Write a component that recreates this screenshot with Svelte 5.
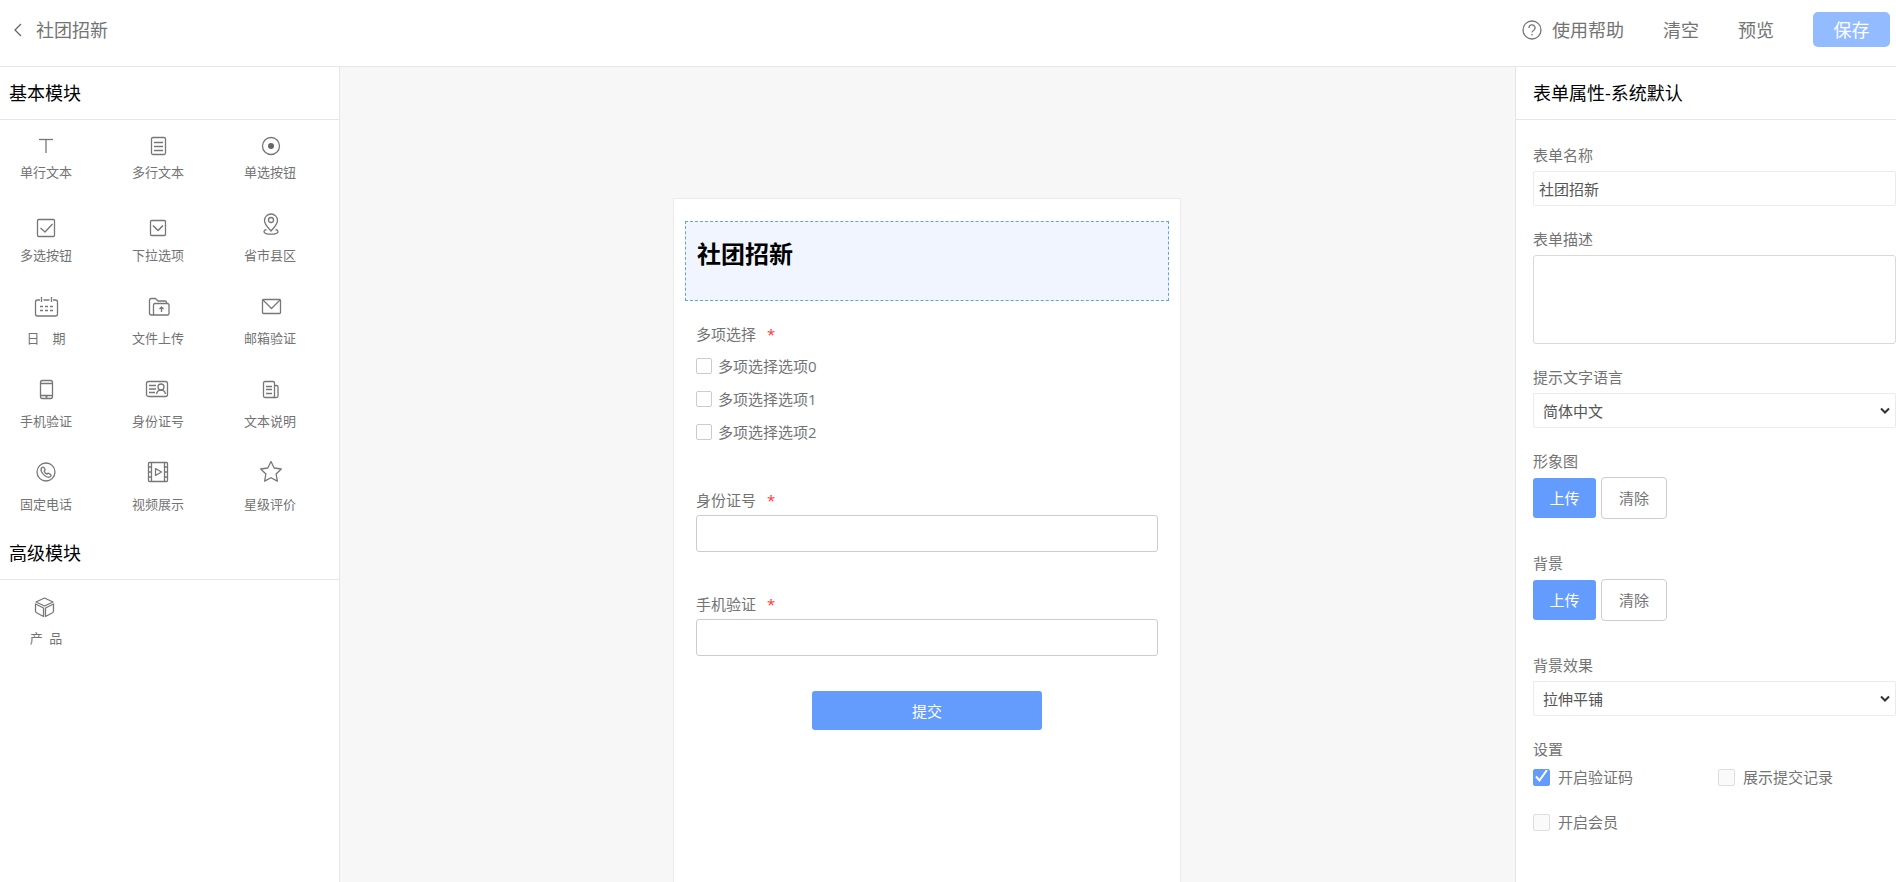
<script>
    const basicModules = [
        {name: "单行文本", icon: `<line x1="7" y1="11.5" x2="21" y2="11.5"/><line x1="14" y1="11.5" x2="14" y2="25"/>`},
        {name: "多行文本", icon: `<rect x="7.5" y="9.5" width="14" height="17" rx="1.5"/><path d="M10 14.5h9M10 18.5h9M10 22.5h9"/>`},
        {name: "单选按钮", icon: `<circle cx="15" cy="18" r="8.5"/><circle cx="15" cy="18" r="3" fill="#666" stroke="none"/>`},
        {name: "多选按钮", icon: `<rect x="5.5" y="8.5" width="17" height="17" rx="1"/><path d="M8.5 17l4.5 4 7.5-8"/>`},
        {name: "下拉选项", icon: `<rect x="6.5" y="9.5" width="15" height="15" rx="1"/><path d="M9 14.5l5 5 5-5" stroke-width="1.6"/>`},
        {name: "省市县区", icon: `<path d="M15 20c-2.5-3-6.5-6.5-6.5-10.5a6.5 6.5 0 0 1 13 0c0 4-4 7.5-6.5 10.5z"/><circle cx="15" cy="9" r="2.5"/><path d="M10.5 18.5c-2 .5-2.5 1.3-2.5 2 0 1.5 3 2.7 7 2.7s7-1.2 7-2.7c0-.7-.5-1.5-2.5-2"/>`},
        {name: "日　期", icon: `<path d="M8 6H5.5a2 2 0 0 0-2 2v12a2 2 0 0 0 2 2h18a2 2 0 0 0 2-2V8a2 2 0 0 0-2-2H21M11.5 6h6M9.5 3v5M19.5 3v5"/><path d="M8 12.5h3M13 12.5h3M18 12.5h3M8 16.5h3M13 16.5h3M18 16.5h3"/>`},
        {name: "文件上传", icon: `<path d="M9.5 21H7.5a2 2 0 0 1-2-2V6.500a2 2 0 0 1 2-2h4l2.500 2.500h7a1.500 1.500 0 0 1 1.500 1.500V9.500"/><path d="M9.500 21V11a1.500 1.500 0 0 1 1.500-1.500h12.500a1.500 1.500 0 0 1 1.500 1.500v8.500a1.500 1.500 0 0 1-1.500 1.500z"/><path d="M17.500 18v-5M15.500 15l2-2 2 2"/>`},
        {name: "邮箱验证", icon: `<rect x="6.5" y="5.5" width="18" height="14" rx="1"/><path d="M7 6l8.500 8.500L24 6"/>`},
        {name: "手机验证", icon: `<rect x="8.5" y="3.5" width="12" height="18" rx="2"/><path d="M8.5 6.5h12M8.5 18.5h12M13.5 20h2"/>`},
        {name: "身份证号", icon: `<rect x="2.5" y="4.5" width="21" height="15" rx="2"/><path d="M5 8.5h7M5 12h7M5 15.5h6"/><circle cx="17" cy="10" r="3"/><path d="M12.5 17c.5-2.500 2-4 4.500-4s4 1.500 4.500 4"/>`},
        {name: "文本说明", icon: `<rect x="7.5" y="4.5" width="11" height="16" rx="1.5"/><path d="M18.5 8.5h2a1.500 1.500 0 0 1 1.500 1.500v9a1.500 1.500 0 0 1-1.500 1.500H17"/><path d="M10 9.500h6M10 12.500h6M10 16.500h6"/>`},
        {name: "固定电话", icon: `<circle cx="14" cy="12" r="9"/><path d="M10 7.500c.7-.6 1.500-.5 2 .2l1 1.600c.4.700.1 1.200-.8 2 .5 1.300 1.500 2.300 2.800 2.900.7-.9 1.300-1.200 2-.7l1.600 1.100c.6.500.6 1.200 0 1.800-1.200 1.300-3 1-5-.2-2-1.300-3.500-3-4.200-4.700-.6-1.700-.4-3.200.6-4z"/>`},
        {name: "视频展示", icon: `<rect x="4.5" y="2.5" width="19" height="19" rx="1"/><path d="M7.500 2.500v19M20.500 2.500v19M4.500 7h3M4.500 12h3M4.500 17h3M20.500 7h3M20.500 12h3M20.500 17h3M11.500 8.500v7l6-3.500z"/>`},
        {name: "星级评价", icon: `<path d="M15 1.500l3.200 6.500 7.100 1-5.200 5 1.300 7.100-6.400-3.400-6.400 3.400 1.300-7.100-5.200-5 7.100-1z"/>`}
    ];

    const advancedModules = [
        {name: "产\u2002品", icon: `<path d="M12.500 4l8.500 4-8.500 4L4 8zM3.500 10l8 4v8.500l-6.500-3.500a2.500 2.500 0 0 1-1.500-2zM21.500 10l-8 4v8.500l6.500-3.500a2.500 2.500 0 0 0 1.500-2z"/>`}
    ];

    const choices = ["多项选择选项0", "多项选择选项1", "多项选择选项2"];

    let formName = $state("社团招新");
    let description = $state("");
    let language = $state("简体中文");
    let effect = $state("拉伸平铺");
    let settings = $state([
        {name: "开启验证码", on: true},
        {name: "展示提交记录", on: false},
        {name: "开启会员", on: false}
    ]);

    const clear = ()=>{
        formName = "";
        description = "";
    }
</script>

{#snippet moduleList(modules)}
    {#each modules as m}
        <button class="module">
            <svg width="28" height="28" viewBox="0 0 28 28" fill="none" stroke="#777" stroke-width="1.3" stroke-linejoin="round">{@html m.icon}</svg>
            <span>{m.name}</span>
        </button>
    {/each}
{/snippet}

{#snippet uploadField(title)}
    <div class="field uploadField">
        <span class="fieldLabel">{title}</span>
        <div class="uploadButtons">
            <button class="upload">上传</button>
            <button class="remove">清除</button>
        </div>
    </div>
{/snippet}

<div class="Editor">
    <header>
        <button class="back">
            <svg width="8" height="14" viewBox="0 0 8 14" fill="none" stroke="#666" stroke-width="1.3">
                <path d="M7 1L1 7l6 6"></path>
            </svg>
            <span>社团招新</span>
        </button>

        <nav>
            <a class="help" href="#help">
                <svg width="20" height="20" viewBox="0 0 20 20" fill="none" stroke="#777" stroke-width="1.3">
                    <circle cx="10" cy="10" r="9"></circle>
                    <path d="M7 8a3 3 0 1 1 4.500 2.500c-1 .6-1.500 1-1.500 2M10 14v1.500"></path>
                </svg>
                <span>使用帮助</span>
            </a>
            <button class="plain" onclick={clear}>清空</button>
            <button class="plain">预览</button>
            <button class="save">保存</button>
        </nav>
    </header>

    <div class="body">
        <aside class="modules">
            <h2>基本模块</h2>
            <div class="moduleGrid">{@render moduleList(basicModules)}</div>
            <h2>高级模块</h2>
            <div class="moduleGrid advanced">{@render moduleList(advancedModules)}</div>
        </aside>

        <main>
            <form class="card" onsubmit={(e)=>e.preventDefault()}>
                <div class="formTitle">
                    <h1>{formName}</h1>
                </div>

                <fieldset class="question">
                    <legend>多项选择<i>*</i></legend>
                    {#each choices as choice}
                        <label class="choice"><input type="checkbox">{choice}</label>
                    {/each}
                </fieldset>

                <div class="question">
                    <label for="idNumber">身份证号<i>*</i></label>
                    <input id="idNumber" class="answer" type="text">
                </div>

                <div class="question">
                    <label for="phone">手机验证<i>*</i></label>
                    <input id="phone" class="answer" type="text">
                </div>

                <button class="submit">提交</button>
            </form>
        </main>

        <aside class="properties">
            <h2>表单属性-系统默认</h2>
            <div class="fields">
                <div class="field">
                    <label class="fieldLabel" for="formName">表单名称</label>
                    <input id="formName" class="control" type="text" bind:value={formName}>
                </div>

                <div class="field">
                    <label class="fieldLabel" for="description">表单描述</label>
                    <textarea id="description" bind:value={description}></textarea>
                </div>

                <div class="field">
                    <label class="fieldLabel" for="language">提示文字语言</label>
                    <select id="language" class="control" bind:value={language}>
                        <option>简体中文</option>
                        <option>English</option>
                    </select>
                </div>

                {@render uploadField("形象图")}
                {@render uploadField("背景")}

                <div class="field">
                    <label class="fieldLabel" for="effect">背景效果</label>
                    <select id="effect" class="control" bind:value={effect}>
                        <option>拉伸平铺</option>
                        <option>重复平铺</option>
                    </select>
                </div>

                <div class="field">
                    <span class="fieldLabel">设置</span>
                    <div class="settings">
                        {#each settings as setting}
                            <label><input type="checkbox" bind:checked={setting.on}>{setting.name}</label>
                        {/each}
                    </div>
                </div>
            </div>
        </aside>
    </div>
</div>

<style>
    :global(body){
        margin: 0;
        background: #fff;
    }

    .Editor{
        min-height: 100vh;
        display: flex;
        flex-direction: column;
        font-family: "Open Sans", "Noto Sans CJK SC", sans-serif;
        font-size: 15px;
        line-height: 20px;
        color: #737373;
    }

    .Editor *{
        box-sizing: border-box;
    }

    button, input, select, textarea{
        font: inherit;
        color: inherit;
        margin: 0;
    }

    button{
        background: none;
        border: none;
        padding: 0;
        cursor: pointer;
    }

    header{
        display: flex;
        justify-content: space-between;
        align-items: flex-start;
        height: 67px;
        padding: 12px 6px 0 14px;
        border-bottom: 1px solid #e6e6e6;
        font-size: 18px;
    }

    .back, .help{
        display: flex;
        align-items: center;
        height: 35px;
        gap: 14px;
    }

    .help{
        gap: 10px;
        color: inherit;
        text-decoration: none;
    }

    nav{
        display: flex;
        align-items: center;
        gap: 39px;
    }

    .save{
        width: 77px;
        height: 35px;
        border-radius: 5px;
        background: #93bbff;
        color: #fff;
    }

    .body{
        flex: 1;
        display: flex;
    }

    h2{
        margin: 0;
        height: 53px;
        padding: 16px 9px;
        border-bottom: 1px solid #e6e6e6;
        font-size: 18px;
        font-weight: normal;
        color: #000;
    }

    .modules{
        width: 340px;
        flex-shrink: 0;
        border-right: 1px solid #e6e6e6;
    }

    .moduleGrid{
        display: grid;
        grid-template-columns: repeat(3, 92px);
        gap: 29px 20px;
        padding: 8px 0 13px;
    }

    .advanced{
        padding-top: 14px;
    }

    .module{
        display: flex;
        flex-direction: column;
        align-items: center;
        gap: 6px;
        font-size: 13px;
        white-space: pre;
    }

    main{
        flex: 1;
        display: flex;
        flex-direction: column;
        align-items: center;
        padding: 131px 1px 0 0;
        background: #f7f7f7;
    }

    .card{
        flex: 1;
        width: 508px;
        padding: 22px 11px;
        border: 1px solid #ebebeb;
        border-bottom: none;
        background: #fff;
        display: flex;
        flex-direction: column;
    }

    .formTitle{
        height: 80px;
        padding: 16px 11px;
        margin-bottom: 23px;
        border: 1px dashed #66a3dc;
        background: #f0f5ff;
    }

    h1{
        margin: 0;
        font-size: 24px;
        line-height: 32px;
        color: #000;
    }

    .question{
        display: flex;
        flex-direction: column;
        gap: 5px;
        margin: 0 0 42px;
        padding: 0 11px;
        border: none;
    }

    fieldset.question{
        display: block;
    }

    legend{
        padding: 0 0 5px;
    }

    i{
        margin-left: 11px;
        font-style: normal;
        color: #f33;
    }

    .choice{
        display: flex;
        align-items: center;
        gap: 6px;
        height: 33px;
    }

    input[type="checkbox"]{
        appearance: none;
        width: 16px;
        height: 16px;
        border: 1px solid #ccc;
        border-radius: 2px;
        background: #fff;
    }

    .answer{
        height: 37px;
        padding: 0 10px;
        border: 1px solid #ccc;
        border-radius: 3px;
    }

    .submit{
        align-self: center;
        width: 230px;
        height: 39px;
        margin-top: -7px;
        border-radius: 3px;
        background: #649cfd;
        color: #fff;
    }

    .properties{
        width: 381px;
        flex-shrink: 0;
        border-left: 1px solid #e6e6e6;
    }

    .properties h2{
        padding-left: 17px;
    }

    .fields{
        display: flex;
        flex-direction: column;
        gap: 23px;
        padding: 25px 0 25px 17px;
    }

    .field{
        display: flex;
        flex-direction: column;
        gap: 6px;
    }

    .uploadField{
        padding-bottom: 11px;
    }

    .control{
        height: 35px;
        padding: 0 5px;
        border: 1px solid #ebebeb;
        border-radius: 2px;
        background: #fff;
        color: #555;
    }

    select.control{
        appearance: none;
        padding: 0 24px 0 9px;
        background: #fff url("data:image/svg+xml,%3Csvg xmlns='http://www.w3.org/2000/svg' width='10' height='8' viewBox='0 0 10 8' fill='none' stroke='%23333' stroke-width='2'%3E%3Cpath d='M1 1.5l4 4 4-4'/%3E%3C/svg%3E") no-repeat right 5px center;
    }

    textarea{
        height: 89px;
        padding: 5px;
        border: 1px solid #d9d9d9;
        border-radius: 3px;
        resize: none;
    }

    .uploadButtons{
        display: flex;
        align-items: center;
        gap: 5px;
    }

    .upload{
        width: 63px;
        height: 40px;
        border-radius: 3px;
        background: #649cfd;
        color: #fff;
    }

    .remove{
        width: 66px;
        height: 42px;
        border: 1px solid #ccc;
        border-radius: 4px;
    }

    .settings{
        display: grid;
        grid-template-columns: 185px 1fr;
        row-gap: 25px;
        padding-top: 2px;
    }

    .settings label{
        display: flex;
        align-items: center;
        gap: 8px;
    }

    .settings input[type="checkbox"]{
        width: 17px;
        height: 17px;
        border-color: #ddd;
        background: #fafafa;
    }

    .settings input[type="checkbox"]:checked{
        border-color: #649cfd;
        background: #649cfd url("data:image/svg+xml,%3Csvg xmlns='http://www.w3.org/2000/svg' viewBox='0 0 15 15' fill='none' stroke='white' stroke-width='2'%3E%3Cpath d='M2 6.500l3.500 4L13 0'/%3E%3C/svg%3E");
    }
</style>
